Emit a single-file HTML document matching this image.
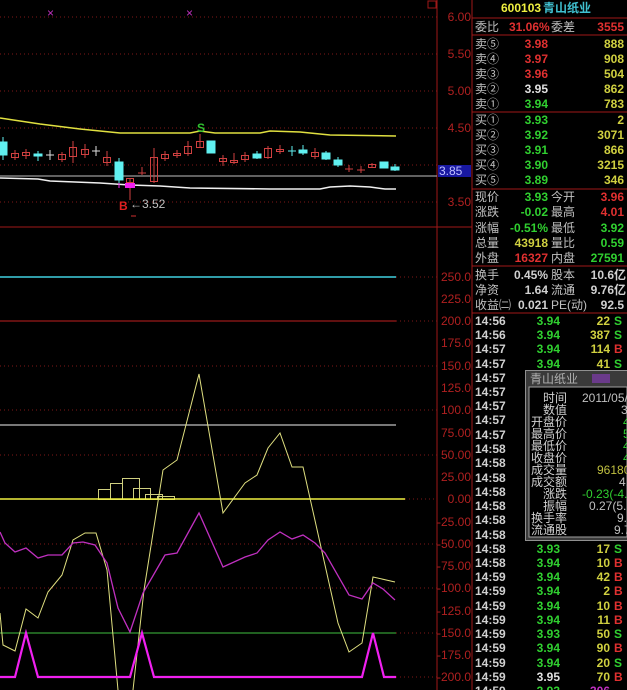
<!DOCTYPE html>
<html><head><meta charset="utf-8"><style>
html,body{margin:0;padding:0;background:#000;width:627px;height:690px;overflow:hidden}
svg{display:block}
text{font-family:"Liberation Sans","Noto Sans CJK SC","WenQuanYi Zen Hei",sans-serif;font-size:12px}
.b{font-weight:bold}
.ax{fill:#b02020;font-size:11px}
</style></head><body>
<svg width="627" height="690" viewBox="0 0 627 690" xmlns="http://www.w3.org/2000/svg">
<rect width="627" height="690" fill="#000"/>
<!-- top chart grid -->
<g stroke="#801818" stroke-dasharray="1,3" stroke-width="1">
<line x1="0" y1="17" x2="437" y2="17"/><line x1="0" y1="54" x2="437" y2="54"/>
<line x1="0" y1="91" x2="437" y2="91"/><line x1="0" y1="128" x2="437" y2="128"/>
<line x1="0" y1="165" x2="437" y2="165"/><line x1="0" y1="202" x2="437" y2="202"/>
</g>
<line x1="437" y1="0" x2="437" y2="690" stroke="#a01818"/>
<line x1="472" y1="0" x2="472" y2="690" stroke="#a01818"/>
<line x1="0" y1="227" x2="472" y2="227" stroke="#a01818"/>
<rect x="428" y="1" width="8" height="7" fill="none" stroke="#a01818"/>
<g class="ax">
<text x="471" y="21" text-anchor="end">6.00</text><text x="471" y="58" text-anchor="end">5.50</text>
<text x="471" y="95" text-anchor="end">5.00</text><text x="471" y="132" text-anchor="end">4.50</text>
<text x="471" y="206" text-anchor="end">3.50</text>
</g>
<rect x="438" y="165" width="33" height="12" fill="#1818a0"/>
<text x="439" y="175" fill="#c0c0ff" font-size="11">3.85</text>
<line x1="0" y1="176" x2="437" y2="176" stroke="#c0c0c0"/>
<text x="47" y="17" fill="#c030c0" font-size="9">×</text><text x="186" y="17" fill="#c030c0" font-size="9">×</text>
<!-- MA lines -->
<polyline fill="none" stroke="#e0e040" stroke-width="1.5" points="0,118 40,124 80,129 120,133 190,133 200,131 215,133 260,133 270,131 300,132 330,135 396,136"/>
<polyline fill="none" stroke="#f0f0f0" stroke-width="1.5" points="0,178 38,179 50,181 100,183 130,185 160,186 190,188 270,189 320,189 330,187 350,186 370,187 385,189 396,189"/>
<!-- candles -->
<g stroke-width="1">
<g stroke="#60f0f0" fill="#60f0f0">
<line x1="3" y1="137" x2="3" y2="160"/><rect x="0" y="142" width="7" height="13"/>
<line x1="38" y1="151" x2="38" y2="161"/><rect x="34" y="154" width="8" height="2"/>
<line x1="119" y1="158" x2="119" y2="186"/><rect x="115" y="162" width="8" height="18"/>
<rect x="207" y="141" width="8" height="12"/>
<line x1="257" y1="151" x2="257" y2="159"/><rect x="253" y="154" width="8" height="4"/>
<line x1="292" y1="146" x2="292" y2="156"/><line x1="288" y1="151" x2="296" y2="151"/>
<line x1="303" y1="145" x2="303" y2="155"/><rect x="299" y="150" width="8" height="3"/>
<line x1="326" y1="151" x2="326" y2="160"/><rect x="322" y="153" width="8" height="6"/>
<line x1="338" y1="157" x2="338" y2="167"/><rect x="334" y="160" width="8" height="5"/>
<rect x="380" y="162" width="8" height="6"/>
<line x1="395" y1="164" x2="395" y2="171"/><rect x="391" y="167" width="8" height="3"/>
</g>
<g stroke="#e0e0e0">
<line x1="50" y1="150" x2="50" y2="160"/><line x1="46" y1="155" x2="54" y2="155"/>
<line x1="96" y1="146" x2="96" y2="156"/><line x1="92" y1="151" x2="100" y2="151"/>
</g>
<g stroke="#d04040" fill="none">
<line x1="15" y1="150" x2="15" y2="160"/><rect x="11.5" y="153.5" width="7" height="4"/>
<line x1="26" y1="149" x2="26" y2="159"/><rect x="22.5" y="152.5" width="7" height="3"/>
<line x1="62" y1="152" x2="62" y2="162"/><rect x="58.5" y="154.5" width="7" height="5"/>
<line x1="73" y1="141" x2="73" y2="163"/><rect x="69.5" y="147.5" width="7" height="9"/>
<line x1="85" y1="144" x2="85" y2="158"/><rect x="81.5" y="149.5" width="7" height="5"/>
<line x1="107" y1="151" x2="107" y2="166"/><rect x="103.5" y="157.5" width="7" height="5"/>
<line x1="130" y1="178" x2="130" y2="200"/><rect x="126.5" y="178.5" width="7" height="4"/>
<line x1="142" y1="167" x2="142" y2="175"/><line x1="138" y1="173" x2="146" y2="173"/>
<line x1="154" y1="148" x2="154" y2="183"/><rect x="150.5" y="157.5" width="7" height="24"/>
<line x1="165" y1="151" x2="165" y2="161"/><rect x="161.5" y="154.5" width="7" height="4"/>
<line x1="177" y1="150" x2="177" y2="158"/><rect x="173.5" y="153.5" width="7" height="2"/>
<line x1="188" y1="141" x2="188" y2="156"/><rect x="184.5" y="146.5" width="7" height="7"/>
<line x1="200" y1="134" x2="200" y2="148"/><rect x="196.5" y="141.5" width="7" height="6"/>
<line x1="223" y1="155" x2="223" y2="166"/><rect x="219.5" y="158.5" width="7" height="3"/>
<line x1="234" y1="153" x2="234" y2="164"/><rect x="230.5" y="160.5" width="7" height="2"/>
<line x1="245" y1="152" x2="245" y2="162"/><rect x="241.5" y="155.5" width="7" height="4"/>
<line x1="268" y1="146" x2="268" y2="159"/><rect x="264.5" y="148.5" width="7" height="9"/>
<line x1="280" y1="145" x2="280" y2="154"/><rect x="276.5" y="149.5" width="7" height="2"/>
<line x1="315" y1="148" x2="315" y2="159"/><rect x="311.5" y="152.5" width="7" height="4"/>
<line x1="349" y1="165" x2="349" y2="172"/><line x1="345" y1="169" x2="353" y2="169"/>
<line x1="361" y1="166" x2="361" y2="173"/><line x1="357" y1="170" x2="365" y2="170"/>
<line x1="372" y1="163" x2="372" y2="168"/><rect x="368.5" y="164.5" width="7" height="3"/>
</g>
<rect x="125" y="183" width="10" height="5" fill="#f020f0"/>
<line x1="119" y1="183" x2="119" y2="188" stroke="#f020f0"/>
</g>
<text x="197" y="132" fill="#30c030" font-size="11" class="b">S</text>
<text x="119" y="210" fill="#e02020" font-size="10" class="b">B</text>
<text x="130" y="208" fill="#c0c0c0" font-size="11">←3.52</text>
<line x1="131" y1="216" x2="136" y2="216" stroke="#d03030"/>
<!-- bottom chart grid -->
<g stroke="#801818" stroke-dasharray="1,3">
<line x1="396" y1="277" x2="437" y2="277"/><line x1="0" y1="299" x2="437" y2="299" stroke-opacity="0"/>
<line x1="396" y1="321" x2="437" y2="321"/>
<line x1="0" y1="366" x2="437" y2="366"/><line x1="0" y1="410" x2="437" y2="410"/>
<line x1="0" y1="455" x2="437" y2="455"/><line x1="0" y1="544" x2="437" y2="544"/>
<line x1="0" y1="588" x2="437" y2="588"/><line x1="396" y1="633" x2="437" y2="633"/>
<line x1="396" y1="677" x2="437" y2="677"/><line x1="405" y1="499" x2="437" y2="499"/>
</g>
<g class="ax">
<text x="471" y="281" text-anchor="end">250.0</text><text x="471" y="303" text-anchor="end">225.0</text>
<text x="471" y="325" text-anchor="end">200.0</text><text x="471" y="347" text-anchor="end">175.0</text>
<text x="471" y="370" text-anchor="end">150.0</text><text x="471" y="392" text-anchor="end">125.0</text>
<text x="471" y="414" text-anchor="end">100.0</text><text x="471" y="437" text-anchor="end">75.00</text>
<text x="471" y="459" text-anchor="end">50.00</text><text x="471" y="481" text-anchor="end">25.00</text>
<text x="471" y="503" text-anchor="end">0.00</text><text x="471" y="526" text-anchor="end">-25.00</text>
<text x="471" y="548" text-anchor="end">-50.00</text><text x="471" y="570" text-anchor="end">-75.00</text>
<text x="471" y="592" text-anchor="end">-100.0</text><text x="471" y="615" text-anchor="end">-125.0</text>
<text x="471" y="637" text-anchor="end">-150.0</text><text x="471" y="659" text-anchor="end">-175.0</text>
<text x="471" y="681" text-anchor="end">-200.0</text>
</g>
<line x1="0" y1="277" x2="396" y2="277" stroke="#40d0e0" stroke-width="1.5"/>
<line x1="0" y1="321" x2="396" y2="321" stroke="#c02020"/>
<line x1="0" y1="425" x2="396" y2="425" stroke="#a0a0a0" stroke-width="1.5"/>
<line x1="0" y1="633" x2="396" y2="633" stroke="#40c040"/>
<!-- histogram -->
<g fill="none" stroke="#d0d080">
<rect x="98.5" y="489.5" width="12" height="10"/><rect x="110.5" y="483.5" width="12" height="16"/>
<rect x="122.5" y="478.5" width="17" height="21"/><rect x="133.5" y="488.5" width="17" height="11"/>
<rect x="145.5" y="494.5" width="17" height="5"/><rect x="157.5" y="496.5" width="17" height="3"/>
</g>
<line x1="0" y1="499" x2="405" y2="499" stroke="#f0f040" stroke-width="1.5"/>
<polyline fill="none" stroke="#e0e080" points="0,613 3,645 15,651 26,609 38,618 48,592 62,575 73,540 85,533 96,533 107,570 118,690"/>
<polyline fill="none" stroke="#e0e080" points="133,690 144,590 163,470 177,460 199,374 223,513 245,483 257,475 268,448 280,433 292,467 303,467 338,623 349,652 362,643 373,577 395,582"/>
<polyline fill="none" stroke="#c030c0" stroke-width="1.3" points="0,532 5,543 15,552 26,548 38,558 48,555 62,555 73,543 83,542 95,545 107,563 118,608 130,632 143,593 165,555 177,553 199,513 223,567 245,557 257,553 268,540 280,532 292,539 303,535 315,543 325,553 349,595 362,599 373,583 383,589 395,600"/>
<polyline fill="none" stroke="#f020f0" stroke-width="2.2" points="0,677 15,677 26,633 38,677 130,677 142,633 154,677 362,677 373,633 384,677 396,677"/>
<!-- right panel -->
<g class="b">
<text x="501" y="12" fill="#f0f040">600103</text><text x="543" y="12" fill="#40c0d0" class="b" font-weight="normal" font-size="13">青山纸业</text>
<line x1="472" y1="18" x2="627" y2="18" stroke="#a01818"/>
<text x="475" y="31" fill="#c0c0c0" font-weight="normal" font-size="13">委比</text>
<text x="509" y="31" fill="#e03030">31.06%</text><text x="551" y="31" fill="#c0c0c0" font-weight="normal" font-size="13">委差</text>
<text x="624" y="31" fill="#e03030" text-anchor="end">3555</text>
<line x1="472" y1="35" x2="627" y2="35" stroke="#a01818"/>
<g font-weight="normal" font-size="13" fill="#c0c0c0">
<text x="475" y="48">卖⑤</text><text x="475" y="63">卖④</text><text x="475" y="78">卖③</text><text x="475" y="93">卖②</text><text x="475" y="108">卖①</text>
<text x="475" y="124">买①</text><text x="475" y="139">买②</text><text x="475" y="154">买③</text><text x="475" y="169">买④</text><text x="475" y="184">买⑤</text>
<text x="475" y="201">现价</text><text x="475" y="216">涨跌</text><text x="475" y="232">涨幅</text><text x="475" y="247">总量</text><text x="475" y="262">外盘</text>
<text x="551" y="201">今开</text><text x="551" y="216">最高</text><text x="551" y="232">最低</text><text x="551" y="247">量比</text><text x="551" y="262">内盘</text>
<text x="475" y="279">换手</text><text x="475" y="294">净资</text><text x="475" y="309">收益㈡</text>
<text x="551" y="279">股本</text><text x="551" y="294">流通</text><text x="551" y="309">PE(动)</text>
</g>
<g text-anchor="end">
<text x="548" y="48" fill="#e03030">3.98</text><text x="548" y="63" fill="#e03030">3.97</text><text x="548" y="78" fill="#e03030">3.96</text><text x="548" y="93" fill="#e0e0e0">3.95</text><text x="548" y="108" fill="#30d030">3.94</text>
<text x="548" y="124" fill="#30d030">3.93</text><text x="548" y="139" fill="#30d030">3.92</text><text x="548" y="154" fill="#30d030">3.91</text><text x="548" y="169" fill="#30d030">3.90</text><text x="548" y="184" fill="#30d030">3.89</text>
<g fill="#d0d040"><text x="624" y="48">888</text><text x="624" y="63">908</text><text x="624" y="78">504</text><text x="624" y="93">862</text><text x="624" y="108">783</text>
<text x="624" y="124">2</text><text x="624" y="139">3071</text><text x="624" y="154">866</text><text x="624" y="169">3215</text><text x="624" y="184">346</text></g>
<text x="548" y="201" fill="#30d030">3.93</text><text x="548" y="216" fill="#30d030">-0.02</text><text x="548" y="232" fill="#30d030">-0.51%</text><text x="548" y="247" fill="#d0d040">43918</text><text x="548" y="262" fill="#e03030">16327</text>
<text x="624" y="201" fill="#e03030">3.96</text><text x="624" y="216" fill="#e03030">4.01</text><text x="624" y="232" fill="#30d030">3.92</text><text x="624" y="247" fill="#30d030">0.59</text><text x="624" y="262" fill="#30d030">27591</text>
<g fill="#d0d0d0"><text x="548" y="279">0.45%</text><text x="548" y="294">1.64</text><text x="548" y="309">0.021</text>
<text x="626" y="279">10.6亿</text><text x="626" y="294">9.76亿</text><text x="624" y="309">92.5</text></g>
</g>
<g stroke="#a01818"><line x1="472" y1="112" x2="627" y2="112"/><line x1="472" y1="189" x2="627" y2="189"/><line x1="472" y1="266" x2="627" y2="266"/><line x1="472" y1="313" x2="627" y2="313"/></g>
<!-- ticks -->
<g fill="#d0d0d0">
<text x="475" y="325">14:56</text><text x="475" y="339">14:56</text>
<text x="475" y="353">14:57</text><text x="475" y="368">14:57</text><text x="475" y="382">14:57</text><text x="475" y="396">14:57</text><text x="475" y="410">14:57</text><text x="475" y="424">14:57</text><text x="475" y="439">14:57</text>
<text x="475" y="453">14:58</text><text x="475" y="467">14:58</text><text x="475" y="482">14:58</text><text x="475" y="496">14:58</text><text x="475" y="510">14:58</text><text x="475" y="524">14:58</text><text x="475" y="539">14:58</text><text x="475" y="553">14:58</text><text x="475" y="567">14:58</text>
<text x="475" y="581">14:59</text><text x="475" y="595">14:59</text><text x="475" y="610">14:59</text><text x="475" y="624">14:59</text><text x="475" y="638">14:59</text><text x="475" y="652">14:59</text><text x="475" y="667">14:59</text><text x="475" y="681">14:59</text><text x="475" y="695">14:59</text>
</g>
<g fill="#30d030" text-anchor="end">
<text x="560" y="325">3.94</text><text x="560" y="339">3.94</text><text x="560" y="353">3.94</text><text x="560" y="368">3.94</text>
<text x="560" y="553">3.93</text><text x="560" y="567">3.94</text><text x="560" y="581">3.94</text><text x="560" y="595">3.94</text><text x="560" y="610">3.94</text><text x="560" y="624">3.94</text><text x="560" y="638">3.93</text><text x="560" y="652">3.94</text><text x="560" y="667">3.94</text><text x="560" y="681" fill="#e0e0e0">3.95</text><text x="560" y="695">3.93</text>
</g>
<g fill="#d0d040" text-anchor="end">
<text x="610" y="325">22</text><text x="610" y="339">387</text><text x="610" y="353">114</text><text x="610" y="368">41</text>
<text x="610" y="553">17</text><text x="610" y="567">10</text><text x="610" y="581">42</text><text x="610" y="595">2</text><text x="610" y="610">10</text><text x="610" y="624">11</text><text x="610" y="638">50</text><text x="610" y="652">90</text><text x="610" y="667">20</text><text x="610" y="681">70</text><text x="610" y="695" fill="#c030c0">306</text>
</g>
<g>
<text x="614" y="325" fill="#30d030">S</text><text x="614" y="339" fill="#30d030">S</text><text x="614" y="353" fill="#e03030">B</text><text x="614" y="368" fill="#30d030">S</text>
<text x="614" y="553" fill="#30d030">S</text><text x="614" y="567" fill="#e03030">B</text><text x="614" y="581" fill="#e03030">B</text><text x="614" y="595" fill="#e03030">B</text><text x="614" y="610" fill="#e03030">B</text><text x="614" y="624" fill="#e03030">B</text><text x="614" y="638" fill="#30d030">S</text><text x="614" y="652" fill="#e03030">B</text><text x="614" y="667" fill="#30d030">S</text><text x="614" y="681" fill="#e03030">B</text>
</g>
</g>
<!-- popup -->
<rect x="525" y="370" width="102" height="171" fill="#3a3a3a"/>
<rect x="525.5" y="370.5" width="102" height="170" fill="none" stroke="#909090"/>
<text x="530" y="383" fill="#b0b0b0" font-size="12">青山纸业</text>
<rect x="592" y="374" width="18" height="9" fill="#6a3a8a"/>
<rect x="529" y="387" width="98" height="150" fill="#000" stroke="#a0a0a0"/>
<g fill="#d0d0d0" font-size="11" text-anchor="end">
<text x="567" y="402">时间</text><text x="567" y="414">数值</text><text x="567" y="426">开盘价</text><text x="567" y="438">最高价</text><text x="567" y="450">最低价</text><text x="567" y="462">收盘价</text><text x="567" y="474">成交量</text><text x="567" y="486">成交额</text><text x="567" y="498">涨跌</text><text x="567" y="510">振幅</text><text x="567" y="522">换手率</text><text x="567" y="534">流通股</text>
</g>
<g font-size="10" fill="#c0c0c0">
<text x="582" y="402">2011/05/17</text><text x="621" y="414">3.</text>
<text x="623" y="426" fill="#30d030">4</text><text x="623" y="438" fill="#30d030">5</text><text x="623" y="450" fill="#30d030">4</text><text x="623" y="462" fill="#30d030">4</text>
<text x="597" y="474" fill="#c0c040">96180</text><text x="619" y="486">4.</text>
<text x="582" y="498" fill="#30d030">-0.23(-4.5</text><text x="589" y="510">0.27(5.3</text><text x="617" y="522">9.</text><text x="614" y="534">9.7</text>
</g>
</svg>
</body></html>
